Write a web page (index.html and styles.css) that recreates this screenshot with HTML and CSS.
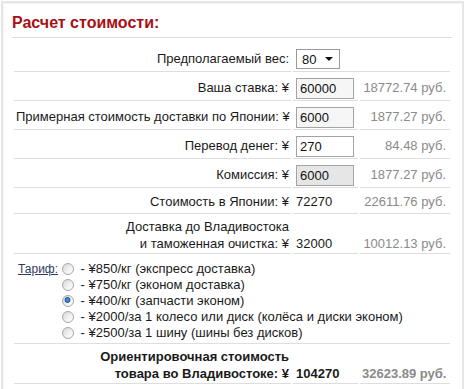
FILE: index.html
```html
<!DOCTYPE html>
<html lang="ru">
<head>
<meta charset="utf-8">
<title>Расчет стоимости</title>
<link rel="stylesheet" href="styles.css">
</head>
<body>
<div class="calc">
  <h2 class="title">Расчет стоимости:</h2>
  <table class="grid">
    <colgroup><col class="c1"><col class="c2"><col class="c3"></colgroup>
    <tr class="r-in">
      <td class="lbl">Предполагаемый вес:</td>
      <td colspan="2"><span class="select"><span class="sel-val">80</span><span class="arrow"></span></span></td>
    </tr>
    <tr class="r-in">
      <td class="lbl">Ваша ставка: ¥</td>
      <td><input class="fld ro" value="60000"></td>
      <td class="rub">18772.74 руб.</td>
    </tr>
    <tr class="r-in">
      <td class="lbl">Примерная стоимость доставки по Японии: ¥</td>
      <td><input class="fld ro" value="6000"></td>
      <td class="rub">1877.27 руб.</td>
    </tr>
    <tr class="r-in">
      <td class="lbl">Перевод денег: ¥</td>
      <td><input class="fld" value="270"></td>
      <td class="rub">84.48 руб.</td>
    </tr>
    <tr class="r-in">
      <td class="lbl">Комиссия: ¥</td>
      <td><input class="fld dis" value="6000"></td>
      <td class="rub">1877.27 руб.</td>
    </tr>
    <tr class="r-plain">
      <td class="lbl">Стоимость в Японии: ¥</td>
      <td class="val">72270</td>
      <td class="rub">22611.76 руб.</td>
    </tr>
    <tr class="r-two">
      <td class="lbl">Доставка до Владивостока<br>и таможенная очистка: ¥</td>
      <td class="val bottom">32000</td>
      <td class="rub bottom">10012.13 руб.</td>
    </tr>
    <tr class="r-tariff">
      <td colspan="3">
        <div class="tariff">
          <span class="tariff-lbl">Тариф:</span>
          <div class="opts">
            <label class="opt"><input type="radio" name="t" class="rad"> - ¥850/кг (экспресс доставка)</label>
            <label class="opt"><input type="radio" name="t" class="rad"> - ¥750/кг (эконом доставка)</label>
            <label class="opt"><input type="radio" name="t" class="rad" checked> - ¥400/кг (запчасти эконом)</label>
            <label class="opt"><input type="radio" name="t" class="rad"> - ¥2000/за 1 колесо или диск (колёса и диски эконом)</label>
            <label class="opt"><input type="radio" name="t" class="rad"> - ¥2500/за 1 шину (шины без дисков)</label>
          </div>
        </div>
      </td>
    </tr>
    <tr class="r-two total">
      <td class="lbl">Ориентировочная стоимость<br>товара во Владивостоке: ¥</td>
      <td class="val bottom">104270</td>
      <td class="rub bottom">32623.89 руб.</td>
    </tr>
  </table>
</div>
</body>
</html>
```

FILE: styles.css
```css
html, body {
  margin: 0;
  padding: 0;
  background: #ffffff;
}

body {
  font-family: "Liberation Sans", Arial, sans-serif;
  font-size: 13px;
  color: #1a1a1a;
}

.calc {
  margin: 1px 4px 0 1px;
  border: 2px solid #e6e6e6;
  border-bottom: none;
  padding: 0 10px 10px 9px;
  min-height: 400px;
  box-shadow: inset 1px 1px 0 #f4f4f4;
}

.title {
  margin: 0;
  padding: 11px 0 5px 0;
  font-size: 16px;
  line-height: 18px;
  font-weight: bold;
  color: #a80f14;
  border-bottom: 1px solid #dcdcdc;
}

.grid {
  width: 440px;
  margin-top: 5px;
  border-collapse: separate;
  border-spacing: 2px;
  table-layout: fixed;
  margin-left: 0;
}

.c1 { width: 277px; }
.c2 { width: 65px; }
.c3 { width: 90px; }

.grid td {
  box-sizing: border-box;
  border-bottom: 1px solid #dedede;
  padding: 0 2px;
  line-height: 17px;
  vertical-align: middle;
  white-space: nowrap;
}

.r-in td { height: 27px; }
.r-plain td { height: 24px; }
.r-two td { height: 38px; }
.r-tariff td { height: 88px; vertical-align: top; }

.grid td.lbl {
  text-align: right;
  padding-right: 2px;
}

.grid td.val {
  padding-left: 3px;
}

.grid td.rub {
  text-align: right;
  color: #8a8a8a;
  padding-right: 4px;
}

.grid td.bottom {
  vertical-align: bottom;
  padding-bottom: 1px;
}

.total td {
  font-weight: bold;
}

.grid td:nth-child(2) {
  padding-left: 3px;
}

.fld {
  box-sizing: border-box;
  width: 58px;
  height: 21px;
  margin: 2px 0 0 0;
  padding: 0 3px;
  border: 1px solid #a4a4a4;
  font-family: "Liberation Sans", Arial, sans-serif;
  font-size: 13px;
  color: #111;
  background: #ffffff;
  display: block;
}

.fld.ro { background: #f6f6f6; }
.fld.dis { background: #e6e6e6; }

.select {
  box-sizing: border-box;
  display: flex;
  align-items: center;
  justify-content: space-between;
  width: 44px;
  height: 20px;
  margin-top: 2px;
  padding: 0 6px 0 5px;
  border: 1px solid #9a9a9a;
  background: #fff;
  color: #111;
}

.arrow {
  width: 0;
  height: 0;
  border-left: 4px solid transparent;
  border-right: 4px solid transparent;
  border-top: 4px solid #111;
}

.tariff {
  display: flex;
  padding: 5px 0 0 2px;
}

.tariff-lbl {
  width: 44px;
  flex: none;
  font-size: 12px;
  line-height: 16px;
  color: #2f3b63;
  text-decoration: underline;
}

.opts {
  display: flex;
  flex-direction: column;
}

.opt {
  display: flex;
  align-items: center;
  height: 16px;
  line-height: 16px;
  white-space: pre;
}

.rad {
  appearance: none;
  -webkit-appearance: none;
  box-sizing: border-box;
  width: 12px;
  height: 12px;
  margin: 0 3px 0 0;
  border: 1px solid #a7a7a7;
  border-radius: 50%;
  background: linear-gradient(135deg, #d8d8d8 0%, #f2f2f2 60%, #ffffff 100%);
  flex: none;
}

.rad:checked {
  background:
    radial-gradient(circle at 45% 40%, #5aa8e8 0, #1d5fa8 2.5px, transparent 3.3px),
    linear-gradient(135deg, #d8d8d8 0%, #f2f2f2 60%, #ffffff 100%);
}
```
